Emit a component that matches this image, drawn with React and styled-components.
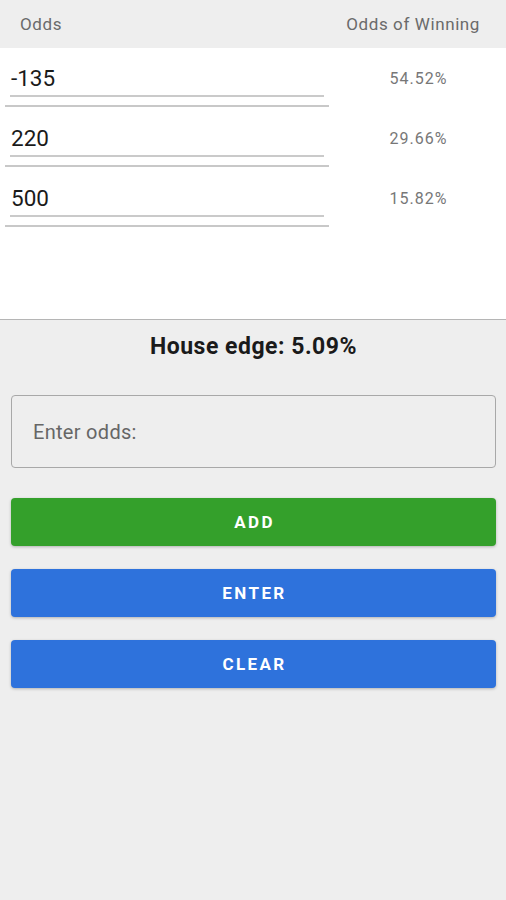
import React from "react";
import styled, { createGlobalStyle } from "styled-components";

const GlobalStyle = createGlobalStyle`
  html, body {
    margin: 0;
    padding: 0;
    background: #eeeeee;
    font-family: Roboto, "Liberation Sans", sans-serif;
  }
`;

const Page = styled.div`
  width: 506px;
  min-height: 900px;
  background: #eeeeee;
  display: flex;
  flex-direction: column;
`;

const TableHeader = styled.div`
  height: 48px;
  display: flex;
  align-items: center;
  justify-content: space-between;
  padding: 0 26px 0 20px;
  color: #6a6a6a;
  font-size: 17px;
  letter-spacing: 0.6px;
`;

const TableBody = styled.div`
  background: #ffffff;
  height: 271px;
  border-bottom: 1px solid #b5b5b5;
`;

const Row = styled.div`
  height: 60px;
  display: flex;
  align-items: stretch;
`;

const OddsCell = styled.div`
  width: 324px;
  margin-left: 5px;
  border-bottom: 2px solid #c8c8c8;
  box-sizing: border-box;
  height: 59px;
  padding: 0 5px;
`;

const OddsInput = styled.div`
  height: 49px;
  box-sizing: border-box;
  border-bottom: 2px solid #cacaca;
  display: flex;
  align-items: center;
  padding: 12px 0 0 1px;
  font-size: 22.5px;
  color: #1a1a1a;
`;

const Percent = styled.div`
  flex: 1;
  display: flex;
  align-items: flex-start;
  justify-content: center;
  padding-top: 21px;
  padding-left: 2px;
  font-size: 16px;
  letter-spacing: 1px;
  color: #777777;
`;

const Controls = styled.div`
  display: flex;
  flex-direction: column;
  padding: 0 10px 0 11px;
`;

const HouseEdge = styled.div`
  text-align: center;
  font-weight: 700;
  font-size: 23px;
  letter-spacing: 0.5px;
  color: #1a1a1a;
  margin-top: 12px;
  height: 30px;
  line-height: 30px;
`;

const OddsField = styled.div`
  margin-top: 33px;
  height: 73px;
  box-sizing: border-box;
  border: 1px solid #a8a8a8;
  border-radius: 4px;
  display: flex;
  align-items: center;
  padding-left: 21px;
  font-size: 20px;
  letter-spacing: 0.3px;
  color: #666666;
`;

const ActionButton = styled.div`
  margin-top: ${(p) => p.$gap}px;
  height: 48px;
  border-radius: 4px;
  background: ${(p) => p.$color};
  color: #ffffff;
  font-weight: 700;
  font-size: 17px;
  letter-spacing: 2.4px;
  padding-left: 2px;
  display: flex;
  align-items: center;
  justify-content: center;
  box-shadow: 0 1px 3px rgba(0, 0, 0, 0.25);
`;

const rows = [
  { odds: "-135", pct: "54.52%" },
  { odds: "220", pct: "29.66%" },
  { odds: "500", pct: "15.82%" },
];

export default function App() {
  return (
    <Page>
      <GlobalStyle />
      <TableHeader>
        <span>Odds</span>
        <span>Odds of Winning</span>
      </TableHeader>
      <TableBody>
        {rows.map((r) => (
          <Row key={r.odds}>
            <OddsCell>
              <OddsInput>{r.odds}</OddsInput>
            </OddsCell>
            <Percent>{r.pct}</Percent>
          </Row>
        ))}
      </TableBody>
      <Controls>
        <HouseEdge>House edge: 5.09%</HouseEdge>
        <OddsField>Enter odds:</OddsField>
        <ActionButton $gap={30} $color="#34a02b">ADD</ActionButton>
        <ActionButton $gap={23} $color="#2e72dc">ENTER</ActionButton>
        <ActionButton $gap={23} $color="#2e72dc">CLEAR</ActionButton>
      </Controls>
    </Page>
  );
}
